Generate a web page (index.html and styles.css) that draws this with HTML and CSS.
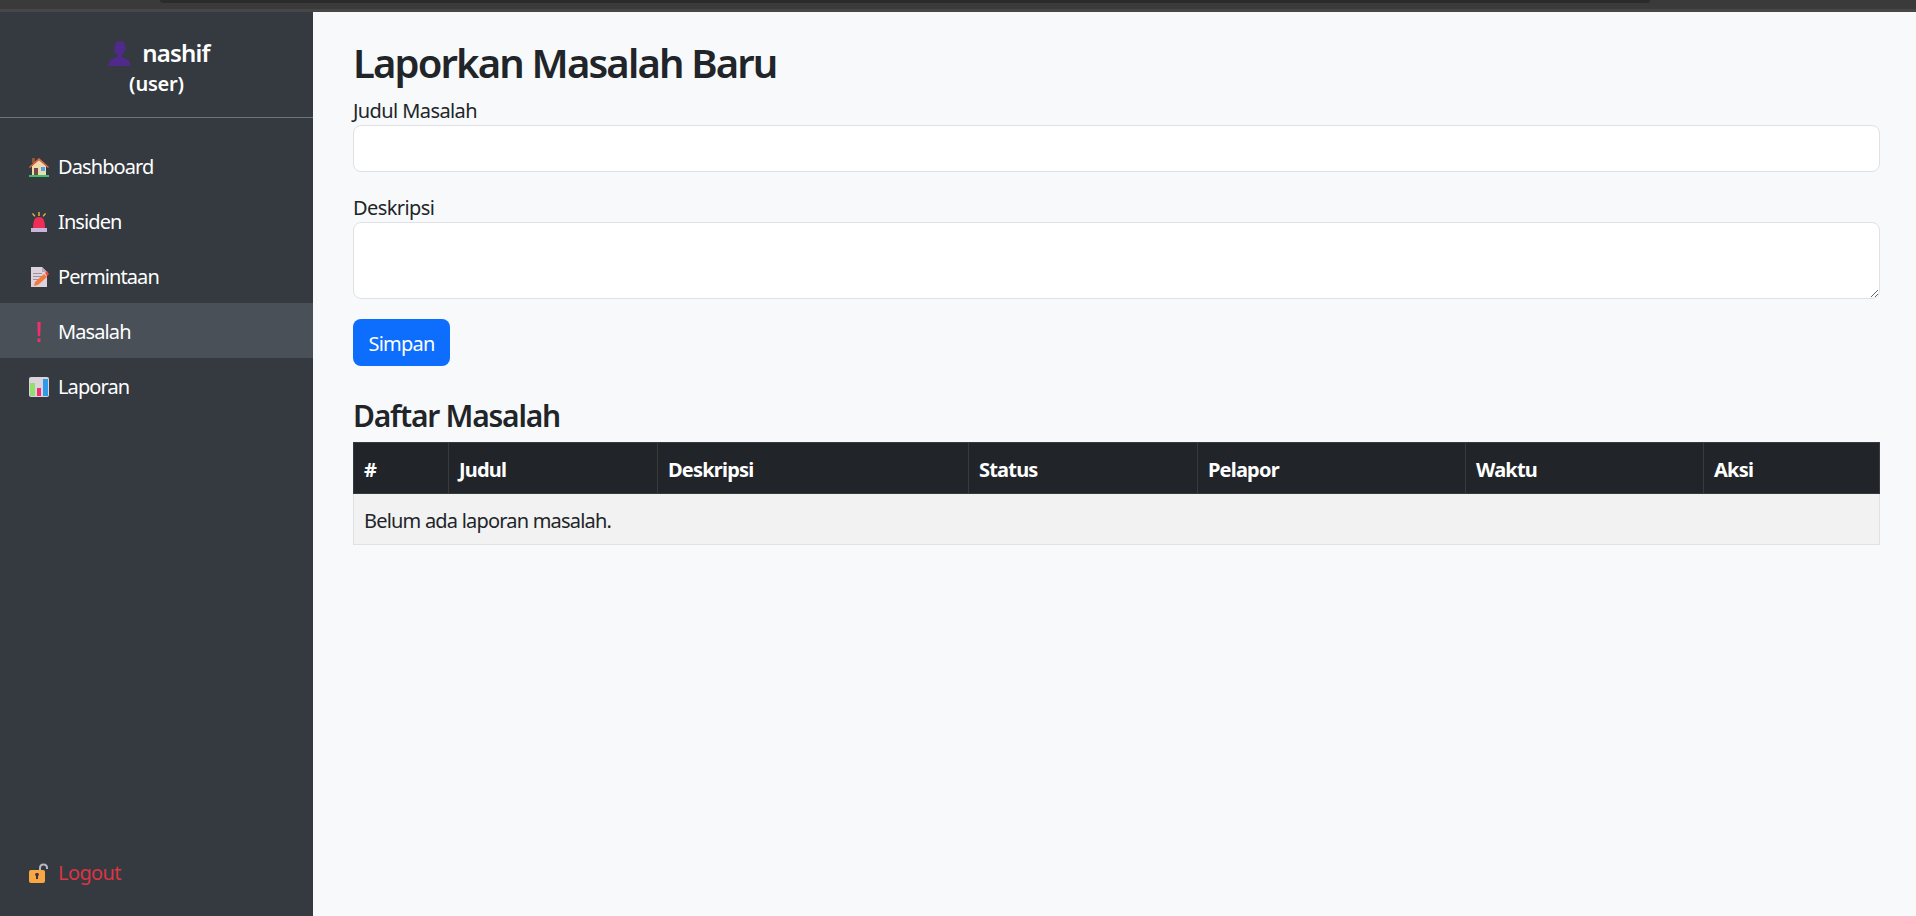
FILE: index.html
```html
<!DOCTYPE html>
<html lang="id">
<head>
  <meta charset="UTF-8" />
  <meta name="viewport" content="width=device-width, initial-scale=1.0" />
  <title>Laporkan Masalah</title>
  <link rel="stylesheet" href="styles.css">
</head>
<body>
  <div class="top-strip"><div class="top-strip-tab"></div></div>
  <div class="wrapper">
    <aside class="sidebar">
      <div class="sidebar-header">
        <div class="user-name">
          <svg class="user-icon" viewBox="0 0 24 26"><path fill="#4f2a8a" d="M7 2.500 9 .5h6l2 2v3h1v4h-1l-1 3-2 2v2l6 3c2 1 3 3 3 6.500H0c0-3.500 1-5.500 3-6.500l6-3v-2l-2-2-1-3H6v-4h1z"/></svg>
          <span>nashif</span>
        </div>
        <div class="user-role">(user)</div>
      </div>
      <nav class="nav-list">
        <a class="nav-link" href="#">
          <svg class="nav-icon" viewBox="0 0 20 20"><path fill="#8d5a3c" d="M3 1h3v5H3z"/><path fill="#f3d9b0" d="M3 9l7-6 7 6v9H3z"/><path fill="#e9663c" d="M0 10 10 1l10 9-1 1-9-8-9 8z"/><path fill="#6d4c41" d="M5 11h4v7H5z"/><path fill="#3fa9f5" d="M12 10h4v4h-4z"/><path fill="#35c46a" d="M0 18h20v2H0z"/></svg>
          Dashboard
        </a>
        <a class="nav-link" href="#">
          <svg class="nav-icon" viewBox="0 0 20 20"><path fill="#e9b949" d="M9.300 0h1.400v4H9.300zM3 2l1-1 2.500 3-1 .7zM17 2l-1-1-2.500 3 1 .7z"/><path fill="#f02d55" d="M4 16c0-8 2-11 6-11s6 3 6 11z"/><path fill="#c9b5dc" d="M2 16h16v4H2z"/></svg>
          Insiden
        </a>
        <a class="nav-link" href="#">
          <svg class="nav-icon" viewBox="0 0 20 20"><path fill="#dcd3dc" d="M2 0h11l5 5v15H2z"/><path fill="#b7a9b8" d="M13 0l5 5h-5z"/><path fill="#9a929c" d="M4 6h9v1H4zM4 9h9v1H4zM4 12h6v1H4z"/><path fill="#f4793b" d="M5 19l1-4 9-8 3 3-9 8z"/><path fill="#f2493f" d="M16 6l2-2 2 3-2 2z"/></svg>
          Permintaan
        </a>
        <a class="nav-link active" href="#">
          <svg class="nav-icon" viewBox="0 0 20 20"><path fill="#f0306a" d="M8.300 0h3.400l-.5 14H8.800zM8.500 16.500h3V20h-3z"/></svg>
          Masalah
        </a>
        <a class="nav-link" href="#">
          <svg class="nav-icon" viewBox="0 0 20 20"><rect fill="#dcd3dc" width="20" height="20" rx="2"/><path fill="#8fe06c" d="M1 6h5v13H1z"/><path fill="#f0306a" d="M8 11h4v8H8z"/><path fill="#2f9be8" d="M14 2h5v17h-5z"/></svg>
          Laporan
        </a>
      </nav>
      <a class="logout-link" href="#">
        <svg class="nav-icon" viewBox="0 0 20 20"><path fill="none" stroke="#b9b5c4" stroke-width="2" d="M11 8V5c0-2.200 1.500-3.500 3.500-3.500S18 3 18 5v1"/><rect fill="#f9a740" y="7" width="16" height="13" rx="2"/><path fill="#3a2f55" d="M8 10a1.600 1.600 0 0 1 1 3v3H7v-3a1.600 1.600 0 0 1 1-3z"/></svg>
        Logout
      </a>
    </aside>
    <main class="content">
      <h1>Laporkan Masalah Baru</h1>
      <form class="problem-form">
        <div class="form-group">
          <label for="judul">Judul Masalah</label>
          <input type="text" id="judul" class="form-control" />
        </div>
        <div class="form-group">
          <label for="deskripsi">Deskripsi</label>
          <textarea id="deskripsi" class="form-control form-area"></textarea>
        </div>
        <button type="submit" class="btn-primary"><span class="btn-text">Simpan</span></button>
      </form>
      <h3>Daftar Masalah</h3>
      <table class="problem-table">
        <thead>
          <tr>
            <th class="col-no">#</th>
            <th class="col-judul">Judul</th>
            <th class="col-deskripsi">Deskripsi</th>
            <th class="col-status">Status</th>
            <th class="col-pelapor">Pelapor</th>
            <th class="col-waktu">Waktu</th>
            <th>Aksi</th>
          </tr>
        </thead>
        <tbody>
          <tr>
            <td colspan="7">Belum ada laporan masalah.</td>
          </tr>
        </tbody>
      </table>
    </main>
  </div>
</body>
</html>
```

FILE: styles.css
```css
* {
  box-sizing: border-box;
}
body {
  font-family: "Noto Sans", "Open Sans", sans-serif;
  font-size: 20px;
  line-height: 30px;
  background-color: #f8f9fa;
  color: #212529;
  margin: 0;
  height: 916px;
  overflow: hidden;
  letter-spacing: -0.04em;
}
.top-strip {
  height: 12px;
  background-color: #3a3a3a;
  border-bottom: 3px solid #474747;
}
.top-strip-tab {
  height: 3px;
  margin: 0 266px 0 160px;
  background-color: #2b2b2b;
  border-radius: 0 0 6px 6px;
}
.wrapper {
  display: flex;
  height: 904px;
}
.sidebar {
  width: 313px;
  flex-shrink: 0;
  background-color: #343a40;
  color: #fff;
  display: flex;
  flex-direction: column;
}
.sidebar-header {
  height: 106px;
  padding-top: 26px;
  border-bottom: 1px solid #6c757d;
  text-align: center;
  font-weight: 600;
}
.user-name {
  display: flex;
  justify-content: center;
  align-items: center;
  gap: 10px;
  font-size: 24px;
  line-height: 30px;
  padding-left: 5px;
}
.user-icon {
  width: 24px;
  height: 25px;
}
.user-role {
  line-height: 31px;
  letter-spacing: -0.01em;
}
.nav-list {
  margin-top: 20px;
  flex: 1;
}
.nav-link,
.logout-link {
  display: flex;
  align-items: center;
  gap: 9px;
  height: 55px;
  padding-left: 29px;
  text-decoration: none;
}
.nav-link {
  padding-top: 3px;
  color: #fff;
  letter-spacing: -0.045em;
}
.nav-link.active {
  background-color: #495057;
}
.nav-icon {
  width: 20px;
  height: 20px;
  flex-shrink: 0;
}
.logout-link {
  color: #dc3545;
  margin-bottom: 16px;
  letter-spacing: -0.03em;
}
.content {
  flex: 1;
  padding: 27px 36px 0 40px;
}
h1 {
  font-size: 40px;
  line-height: 48px;
  font-weight: 600;
  letter-spacing: -0.046em;
  margin: 0 0 9px;
}
h3 {
  font-size: 30px;
  line-height: 36px;
  font-weight: 600;
  letter-spacing: -0.041em;
  margin: 32px 0 8px;
}
.form-group {
  margin-bottom: 21px;
}
.form-group label {
  display: block;
  height: 29px;
  letter-spacing: -0.03em;
}
.form-control {
  display: block;
  width: 100%;
  height: 47px;
  border: 1px solid #dee2e6;
  border-radius: 8px;
  background-color: #fff;
}
.form-area {
  height: 77px;
}
.btn-primary {
  display: block;
  width: 97px;
  height: 47px;
  padding: 0;
  margin-top: -1px;
  border: none;
  border-radius: 8px;
  background-color: #0d6efd;
  color: #fff;
  font: inherit;
  letter-spacing: inherit;
}
.btn-text {
  display: block;
  padding-top: 2px;
}
.problem-table {
  width: 100%;
  table-layout: fixed;
  border-collapse: collapse;
}
.problem-table th {
  background-color: #212529;
  color: #fff;
  font-weight: 700;
  text-align: left;
  height: 51px;
  padding: 12px 10px 8px;
  border: 1px solid #373b3e;
}
.problem-table td {
  background-color: #f2f2f2;
  height: 51px;
  padding: 12px 10px 8px;
  border: 1px solid #dee2e6;
}
.col-no { width: 95px; }
.col-judul { width: 209px; }
.col-deskripsi { width: 311px; }
.col-status { width: 229px; }
.col-pelapor { width: 268px; }
.col-waktu { width: 238px; }
```
